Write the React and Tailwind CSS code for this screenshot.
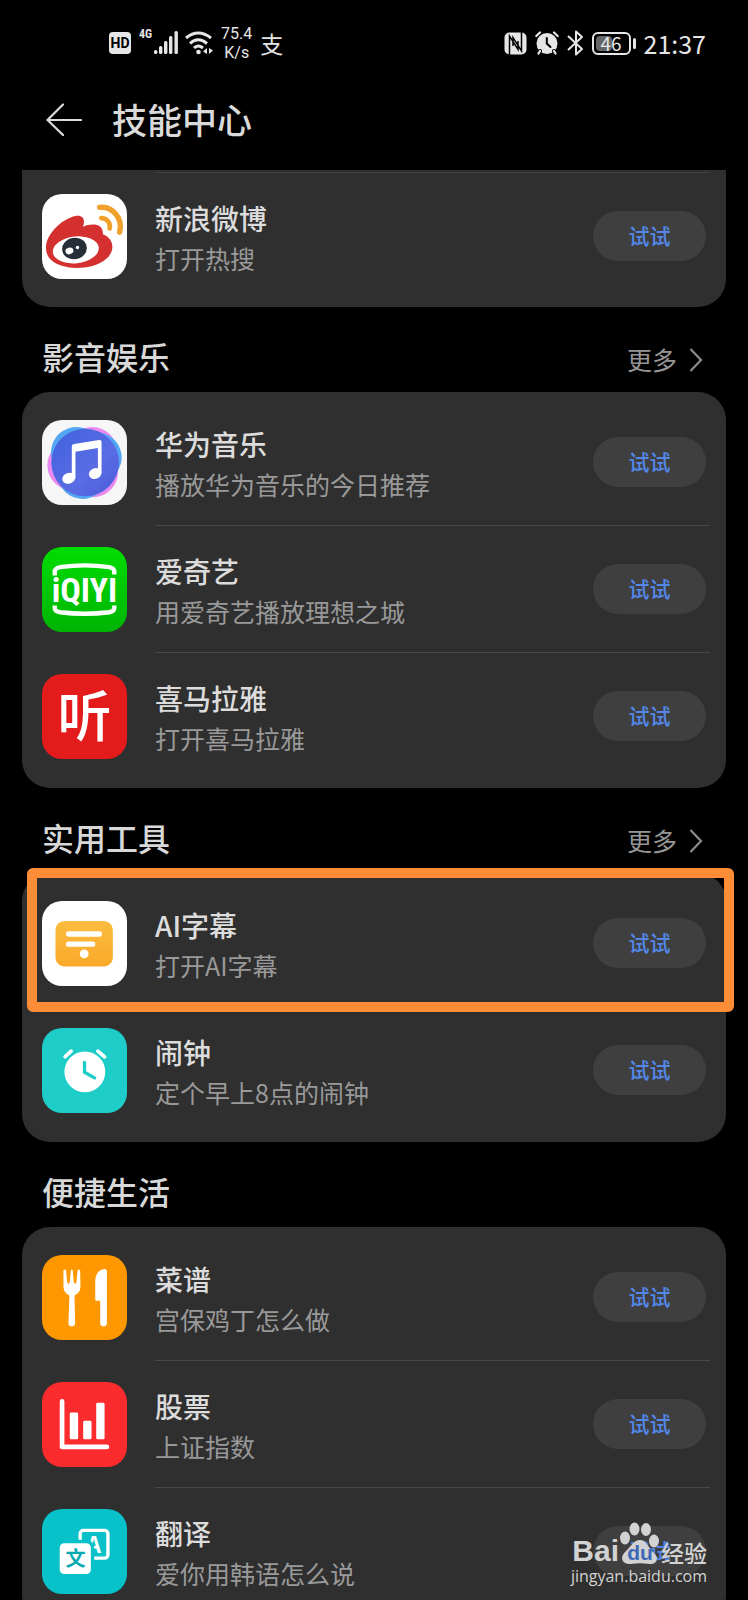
import React from "react";

function WeiboIcon() {
  return (
    <svg viewBox="66 343 254 254" className="size-full bg-white">
      <path
        fill="#d4302f"
        d="M78 500C80 465 120 420 165 409C186 404 198 418 188 441C215 429 250 431 248 463C286 478 285 520 250 543C210 570 130 572 95 542C82 530 77 516 78 500Z"
      />
      <ellipse cx="167" cy="510" rx="69" ry="40" fill="#fff" transform="rotate(-6 167 510)" />
      <ellipse cx="163" cy="506" rx="37" ry="32" fill="#262f38" transform="rotate(-10 163 506)" />
      <ellipse cx="148" cy="513" rx="12" ry="10" fill="#fff" transform="rotate(-15 148 513)" />
      <circle cx="172" cy="503" r="5" fill="#fff" />
      <g fill="none" stroke="#f0a02c" strokeLinecap="round">
        <path strokeWidth="14" d="M243 415C260 415 272 429 268 446" />
        <path strokeWidth="16" d="M238 383C276 378 309 416 298 457" />
      </g>
    </svg>
  );
}

function MusicIcon() {
  return (
    <svg viewBox="66 270 254 254" className="size-full bg-[#f6f6f6]">
      <defs>
        <linearGradient id="music-disc" x1="0" y1="0" x2="1" y2="1">
          <stop offset="0" stopColor="#3f62dc" />
          <stop offset="0.6" stopColor="#5a6ce4" />
          <stop offset="1" stopColor="#4a5bd8" />
        </linearGradient>
      </defs>
      <g strokeWidth="150" strokeLinejoin="round">
        <path d="M157 405L216 366L218 426Z" fill="#e88af0" stroke="#e88af0" />
        <path d="M168 366L229 382L188 431Z" fill="#52a6f2" stroke="#52a6f2" />
      </g>
      <circle cx="195" cy="397" r="101" fill="url(#music-disc)" />
      <g fill="#fff">
        <path d="M155 350Q155 343 162 342L237 330Q244 329 244 337V430H233V354L166 365V444H155Z" />
        <ellipse cx="146" cy="444" rx="20" ry="16" transform="rotate(-20 146 444)" />
        <ellipse cx="225" cy="430" rx="19" ry="16" transform="rotate(-20 225 430)" />
      </g>
    </svg>
  );
}

function IqiyiIcon() {
  return (
    <svg viewBox="66 53 254 254" className="size-full bg-linear-to-b from-[#00dd00] to-[#00b405]">
      <g fill="none" stroke="#fff" strokeWidth="13">
        <path d="M104 138V128Q104 116 120 113Q193 103 267 113Q282 116 282 128V135" />
        <path d="M104 228V235Q104 245 120 248Q193 257 267 248Q282 245 282 235V228" />
      </g>
      <text
        x="193"
        y="217"
        textAnchor="middle"
        fill="#fff"
        fontSize="102"
        fontWeight="700"
        fontFamily="'Roboto Condensed', 'Liberation Sans Narrow', Roboto, sans-serif"
      >
        iQIYI
      </text>
    </svg>
  );
}

function XimalayaIcon() {
  return (
    <svg viewBox="66 435 254 254" className="size-full bg-[#e31b1b]">
      <text
        x="193"
        y="620"
        textAnchor="middle"
        fill="#fff"
        fontSize="162"
        fontWeight="500"
        fontFamily="'Noto Sans CJK SC', sans-serif"
      >
        听
      </text>
    </svg>
  );
}

function SubtitleIcon() {
  return (
    <svg viewBox="68 303 252 252" className="size-full bg-white">
      <defs>
        <linearGradient id="subtitle-panel" x1="0" y1="0" x2="0" y2="1">
          <stop offset="0" stopColor="#fbbc3f" />
          <stop offset="1" stopColor="#faa92a" />
        </linearGradient>
      </defs>
      <rect x="108" y="362" width="170" height="135" rx="26" fill="url(#subtitle-panel)" />
      <rect x="139" y="393" width="107" height="16" rx="8" fill="#fff" />
      <rect x="139" y="423" width="87" height="16" rx="8" fill="#fff" />
      <circle cx="193" cy="460" r="13" fill="#fff" />
    </svg>
  );
}

function ClockIcon() {
  return (
    <svg viewBox="66 25 254 254" className="size-full bg-[#1fcdc8]">
      <circle cx="194" cy="156" r="61" fill="#fff" />
      <g fill="none" strokeLinecap="round" strokeLinejoin="round">
        <path stroke="#1fcdc8" strokeWidth="10" d="M193 128V157L223 174" />
        <path stroke="#fff" strokeWidth="11" d="M135 111L153 94M233 94L253 111" />
      </g>
    </svg>
  );
}

function RecipeIcon() {
  return (
    <svg viewBox="66 72 254 254" className="size-full bg-[#ff9800]">
      <g fill="#fff">
        <path d="M130 118Q134 112 138 118L141 152Q142 158 146 158Q149 158 149 152L152 118Q155 112 158 118L161 152Q162 158 165 158Q169 158 169 152L172 118Q176 112 180 118L181 166Q180 186 163 193L165 275Q165 285 155 285Q145 285 145 275L148 193Q131 186 130 166Z" />
        <path d="M225 206V152Q225 118 252 114Q260 113 260 122V275Q260 285 250 285Q240 285 240 275V209H228Q225 209 225 206Z" />
      </g>
    </svg>
  );
}

function StockIcon() {
  return (
    <svg viewBox="66 456 254 254" className="size-full bg-[#fb2b2e]">
      <path
        d="M126 514V650H260"
        fill="none"
        stroke="#fff"
        strokeWidth="14"
        strokeLinecap="round"
        strokeLinejoin="round"
      />
      <g fill="#fff">
        <rect x="149" y="547" width="25" height="80" rx="4" />
        <rect x="189" y="572" width="25" height="55" rx="4" />
        <rect x="228" y="518" width="25" height="109" rx="4" />
      </g>
    </svg>
  );
}

function TranslateIcon() {
  return (
    <svg viewBox="66 87 254 254" className="size-full bg-[#08c1c9]">
      <rect x="180" y="151" width="83" height="83" rx="10" fill="none" stroke="#fff" strokeWidth="10" />
      <text
        x="221"
        y="218"
        textAnchor="middle"
        fill="#fff"
        fontSize="66"
        fontWeight="700"
        fontFamily="'Noto Sans CJK SC', sans-serif"
      >
        A
      </text>
      <rect x="114" y="184" width="103" height="102" rx="18" fill="#fff" stroke="#08c1c9" strokeWidth="10" />
      <text
        x="166"
        y="258"
        textAnchor="middle"
        fill="#08a9b1"
        fontSize="60"
        fontWeight="700"
        fontFamily="'Noto Sans CJK SC', sans-serif"
      >
        文
      </text>
    </svg>
  );
}

function SignalIcon() {
  return (
    <svg viewBox="0 0 24 24" className="h-6 w-6" fill="#e6e6e6">
      <rect x="0" y="19" width="3.400" height="4" rx="1.500" />
      <rect x="5" y="15" width="3.400" height="8" rx="1.500" />
      <rect x="10" y="10" width="3.400" height="13" rx="1.500" />
      <rect x="15" y="5" width="3.400" height="18" rx="1.500" />
      <rect x="20.500" y="0" width="3.400" height="23" rx="1.500" />
    </svg>
  );
}

function WifiIcon() {
  return (
    <svg viewBox="0 0 28 24" className="h-6 w-7" fill="none" stroke="#e6e6e6" strokeWidth="3">
      <path d="M1 7Q13 -3 26 7" />
      <path d="M5 12.500Q13 5 22 12.500" />
      <path d="M9 17Q13 13 18 17" />
      <circle cx="13.500" cy="21" r="2.300" fill="#e6e6e6" stroke="none" />
      <path d="M22 17V23L18 20.500ZM24 17V23L28 19.500Z" fill="#e6e6e6" stroke="none" />
    </svg>
  );
}

function NfcIcon() {
  return (
    <svg viewBox="0 0 23 23" className="size-[23px]">
      <rect x="0.500" y="0.500" width="22" height="22" rx="5" fill="#e6e6e6" />
      <path
        d="M5.500 23V4L14 17.500V9M17.500 0V19L9 5.500V14"
        fill="none"
        stroke="#000"
        strokeWidth="1.500"
      />
    </svg>
  );
}

function AlarmIcon() {
  return (
    <svg viewBox="0 0 24 24" className="size-6" fill="none" strokeLinecap="round">
      <circle cx="12" cy="12.500" r="10.500" fill="#e6e6e6" />
      <path d="M1.300 5L5 1.500M19 1.500L22.700 5M5 20L3.500 22.500M19 20L20.500 22.500" stroke="#000" strokeWidth="4" />
      <path d="M1.300 5L5 1.500M19 1.500L22.700 5M5 20L3.500 22.500M19 20L20.500 22.500" stroke="#e6e6e6" strokeWidth="2.200" />
      <path d="M11.800 7V12.500L15.500 16" stroke="#000" strokeWidth="2" />
    </svg>
  );
}

function BluetoothIcon() {
  return (
    <svg viewBox="0 0 17 26" className="h-[26px] w-[17px]" fill="none" stroke="#e6e6e6" strokeWidth="2" strokeLinejoin="round">
      <path d="M1 6L15 19L9 24.500V1.500L15 7L1 20" />
    </svg>
  );
}

function StatusBar() {
  return (
    <div className="flex h-[86px] shrink-0 items-center justify-between pr-[42px] pl-[109px] text-[#e6e6e6]">
      <div className="flex items-center">
        <span className="flex size-[22px] items-center justify-center rounded bg-[#e6e6e6] font-['Roboto',sans-serif] text-[14px] font-bold text-black">
          HD
        </span>
        <span className="mr-0.5 ml-2 self-start pt-1 font-['Roboto_Condensed','Roboto',sans-serif] text-[12px] leading-3 font-bold">
          4G
        </span>
        <SignalIcon />
        <span className="ml-[7px]">
          <WifiIcon />
        </span>
        <span className="ml-2 flex flex-col items-center font-['Roboto',sans-serif] text-base leading-[19px]">
          <span>75.4</span>
          <span>K/s</span>
        </span>
        <span className="ml-2 text-[23px] leading-6">支</span>
      </div>
      <div className="flex items-center gap-2">
        <NfcIcon />
        <AlarmIcon />
        <BluetoothIcon />
        <span className="flex items-center gap-0.5">
          <span className="relative flex h-[23px] w-[39px] items-center justify-center rounded-md border-2 border-[#e6e6e6]">
            <span className="absolute inset-y-0.5 left-0.5 w-4 rounded-sm bg-[#666]" />
            <span className="relative text-[19px] leading-5">46</span>
          </span>
          <span className="h-[11px] w-[3px] rounded-full bg-[#e6e6e6]" />
        </span>
        <span className="text-[25px] leading-8">21:37</span>
      </div>
    </div>
  );
}

function SkillRow({ icon: Icon, title, hint, divided }) {
  return (
    <li className="flex h-[127px] items-stretch gap-7 pl-5">
      <div className="size-[85px] shrink-0 self-center overflow-hidden rounded-[20px]">
        <Icon />
      </div>
      <div
        className={
          divided
            ? "mr-4 flex min-w-0 flex-1 items-center border-b border-[#484848] pr-1"
            : "mr-4 flex min-w-0 flex-1 items-center border-b border-transparent pr-1"
        }
      >
        <div className="min-w-0 flex-1 pt-0.5">
          <h3 className="text-[28px] leading-[42px] font-medium text-[#dcdcdc]">{title}</h3>
          <p className="text-[25px] leading-[38px] text-[#999999]">{hint}</p>
        </div>
        <button
          type="button"
          aria-label={"试试 " + title}
          className="h-[50px] w-[113px] shrink-0 rounded-full bg-[#3f3f3f] text-[21px] font-medium text-[#5388ea]"
        >
          试试
        </button>
      </div>
    </li>
  );
}

function SectionHeader({ title, more }) {
  return (
    <div className="flex h-[85px] items-baseline justify-between pt-[25px] pr-[23px] pl-5">
      <h2 className="text-[32px] leading-[48px] font-medium text-[#d8d8d8]">{title}</h2>
      {more && (
        <a href="#more" className="flex items-center gap-3 text-[25px] text-[#959595]">
          更多
          <svg viewBox="0 0 14 24" className="h-6 w-3.5" fill="none" stroke="#8c8c8c" strokeWidth="2.200">
            <path d="M1.500 1L12 12L1.500 23" />
          </svg>
        </a>
      )}
    </div>
  );
}

function SkillCard({ items }) {
  return (
    <ul className="rounded-[28px] bg-[#2f2f2f] pt-[7px] pb-2">
      {items.map((item, i) => (
        <SkillRow key={item.title} {...item} divided={i < items.length - 1} />
      ))}
    </ul>
  );
}

function Watermark() {
  return (
    <div className="pointer-events-none absolute right-[41px] bottom-[14px] flex flex-col items-end text-[#d2d2d2]">
      <div className="flex h-[44px] items-end">
        <span className="font-['Liberation_Sans',sans-serif] text-[30px] leading-[30px] font-bold">Bai</span>
        <span className="relative h-[44px] w-[42px]">
          <svg viewBox="0 0 42 44" className="size-full" fill="#d2d2d2">
            <ellipse cx="6" cy="16" rx="5" ry="6.500" />
            <ellipse cx="15.500" cy="7" rx="5" ry="6.500" />
            <ellipse cx="27" cy="7.500" rx="5" ry="6.500" />
            <ellipse cx="35" cy="19" rx="5" ry="6.500" />
            <path d="M21 18C28 18 29 26 35 31C41 37 37 43 30 42C24 41 18 41 12 42C4 43 0 36 6 30C12 25 14 18 21 18Z" />
          </svg>
          <span className="absolute inset-x-0 bottom-0.5 text-center font-['Liberation_Sans',sans-serif] text-[21px] leading-[22px] font-bold text-[#3c68b8]">
            du
          </span>
        </span>
        <span className="text-[23px] leading-7 font-medium">经验</span>
      </div>
      <span className="font-['Open_Sans',sans-serif] text-[16px] leading-5">jingyan.baidu.com</span>
    </div>
  );
}

const media = [
  { icon: MusicIcon, title: "华为音乐", hint: "播放华为音乐的今日推荐" },
  { icon: IqiyiIcon, title: "爱奇艺", hint: "用爱奇艺播放理想之城" },
  { icon: XimalayaIcon, title: "喜马拉雅", hint: "打开喜马拉雅" },
];

const tools = [
  { icon: SubtitleIcon, title: "AI字幕", hint: "打开AI字幕" },
  { icon: ClockIcon, title: "闹钟", hint: "定个早上8点的闹钟" },
];

const life = [
  { icon: RecipeIcon, title: "菜谱", hint: "宫保鸡丁怎么做" },
  { icon: StockIcon, title: "股票", hint: "上证指数" },
  { icon: TranslateIcon, title: "翻译", hint: "爱你用韩语怎么说" },
];

export default function App() {
  return (
    <div className="relative flex h-screen flex-col overflow-hidden bg-black font-['Noto_Sans_CJK_SC',sans-serif]">
      <StatusBar />
      <header className="flex h-[84px] shrink-0 items-center gap-[30px] pb-[18px] pl-[46px]">
        <button type="button" aria-label="返回">
          <svg viewBox="0 0 36 34" className="h-[34px] w-9" fill="none" stroke="#dcdcdc" strokeWidth="2.200" strokeLinecap="round">
            <path d="M35 18H2M17 2.500L1.500 18L17 33" />
          </svg>
        </button>
        <h1 className="text-[35px] leading-[52px] font-medium text-[#dadada]">技能中心</h1>
      </header>

      <main className="min-h-0 flex-1 overflow-y-auto px-[22px] [scrollbar-width:none]">
        <ul className="rounded-b-[28px] bg-[#2f2f2f] pt-0.5 pb-[7px]">
          <li aria-hidden="true" className="mr-4 ml-[133px] h-px bg-[#404040]" />
          <SkillRow icon={WeiboIcon} title="新浪微博" hint="打开热搜" />
        </ul>

        <section>
          <SectionHeader title="影音娱乐" more />
          <SkillCard items={media} />
        </section>

        <section>
          <SectionHeader title="实用工具" more />
          <div className="relative">
            <SkillCard items={tools} />
            <div className="pointer-events-none absolute -top-[5px] -right-2 left-[5px] h-36 rounded-md border-[10px] border-[#ff8d38]" />
          </div>
        </section>

        <section>
          <SectionHeader title="便捷生活" />
          <SkillCard items={life} />
        </section>
      </main>
      <Watermark />
    </div>
  );
}
